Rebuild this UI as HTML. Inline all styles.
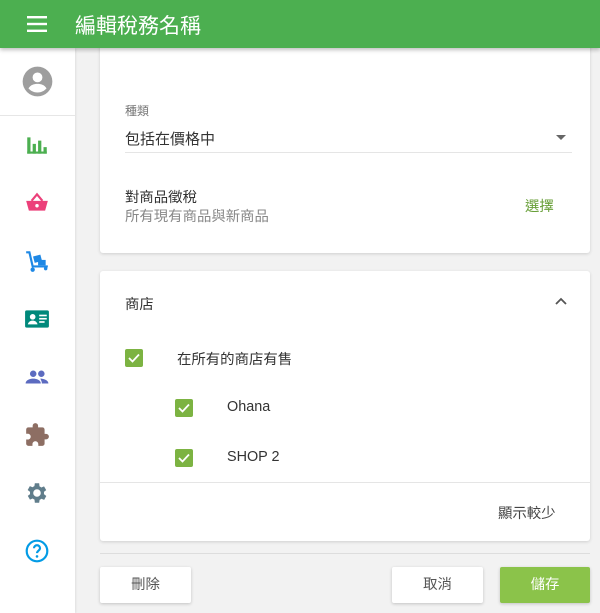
<!DOCTYPE html>
<html><head><meta charset="utf-8"><style>
*{box-sizing:border-box;margin:0;padding:0}
body{width:600px;height:613px;overflow:hidden;background:#f2f2f2;font-family:"Liberation Sans","Noto Sans CJK TC",sans-serif;position:relative;color:#333}
.hdr{position:absolute;left:0;top:0;width:600px;height:48px;background:#4caf50;box-shadow:0 2px 4px rgba(0,0,0,.25);z-index:5}
.hdr .t{position:absolute;left:75px;top:10px;color:#fff;font-size:21px}
.side{position:absolute;left:0;top:48px;width:75px;height:565px;background:#fff;box-shadow:1px 0 2px rgba(0,0,0,.08)}
.side .sep{position:absolute;left:0;top:67px;width:75px;height:1px;background:#e6e6e6}
.ic{position:absolute;left:24px;width:26px;height:26px}
.card{position:absolute;left:100px;width:490px;background:#fff;border-radius:3px;box-shadow:0 1px 3px rgba(0,0,0,.15)}
.s{position:absolute;font-size:14.4px;white-space:nowrap}
.cb{position:absolute;width:18px;height:18px;background:#7cb342;border-radius:2px}
.btn{position:absolute;top:567px;height:36px;border-radius:2px;font-size:14.4px;text-align:center;line-height:36px;box-shadow:0 1px 3px rgba(0,0,0,.2)}
</style></head><body>
<div class="hdr">
<svg style="position:absolute;left:27px;top:15px" width="20" height="18"><rect y="1" width="20" height="2.4" fill="#fff"/><rect y="7.8" width="20" height="2.4" fill="#fff"/><rect y="14.6" width="20" height="2.4" fill="#fff"/></svg>
<div class="t">編輯稅務名稱</div></div>
<div class="side">
<svg style="position:absolute;left:22px;top:18px" width="31" height="31" viewBox="0 0 24 24"><circle cx="12" cy="12" r="11.5" fill="#9e9e9e"/><circle cx="12" cy="8.8" r="3.8" fill="#fff"/><path d="M5 17.3c1.6-2.7 4.2-3.5 7-3.5s5.4.8 7 3.5c-1.8 2-4.2 3.2-7 3.2s-5.2-1.2-7-3.2z" fill="#fff"/></svg>
<div class="sep"></div>
<svg class="ic" style="top:84px" viewBox="0 0 24 24"><path d="M3 5h3v15H3zM8 11h3v9H8zM13 8h3v12h-3zM18 14h3v6h-3z" fill="#4caf50"/><rect x="3" y="18" width="18" height="2" fill="#4caf50"/></svg>
<svg class="ic" style="top:142px" viewBox="0 0 24 24"><path d="M2 10h20l-2.5 9h-15z" fill="#ec407a"/><path d="M7 10l5-6 5 6" fill="none" stroke="#ec407a" stroke-width="2"/><circle cx="12" cy="14.5" r="1.6" fill="#fff"/></svg>
<svg class="ic" style="top:200px" viewBox="0 0 24 24"><path d="M2 4h3l3 13h14" fill="none" stroke="#1e88e5" stroke-width="2"/><rect x="9" y="7" width="7" height="6" fill="#1e88e5" transform="rotate(-15 12 10)"/><rect x="13" y="11" width="7" height="5" fill="#1e88e5"/><circle cx="8" cy="20" r="2" fill="#1e88e5"/><circle cx="20" cy="19" r="1.6" fill="#1e88e5"/></svg>
<svg class="ic" style="top:258px" viewBox="0 0 24 24"><rect x="1" y="4" width="22" height="16" rx="1.5" fill="#00897b"/><circle cx="8" cy="10" r="2.6" fill="#fff"/><path d="M3.5 17c.5-2.4 2.5-3.5 4.5-3.5s4 1.1 4.5 3.5z" fill="#fff"/><rect x="14" y="8" width="7" height="1.5" fill="#fff"/><rect x="14" y="11" width="7" height="1.5" fill="#fff"/><rect x="14" y="14" width="5" height="1.5" fill="#fff"/></svg>
<svg class="ic" style="top:316px" viewBox="0 0 24 24"><circle cx="8.5" cy="9" r="3" fill="#5c6bc0"/><circle cx="16" cy="9" r="3" fill="#5c6bc0"/><path d="M1.5 18c0-3 3.5-4.5 7-4.5s7 1.5 7 4.5z" fill="#5c6bc0"/><path d="M15 13.5c3.5 0 7.5 1.5 7.5 4.5h-6c0-2-1-3.5-1.5-4.5z" fill="#5c6bc0"/></svg>
<svg class="ic" style="top:374px" viewBox="0 0 24 24"><path d="M20.5 11H19V7c0-1.1-.9-2-2-2h-4V3.5a2.5 2.5 0 00-5 0V5H4c-1.1 0-2 .9-2 2v3.8h1.5c1.5 0 2.7 1.2 2.7 2.7S5 16.2 3.5 16.2H2V20c0 1.1.9 2 2 2h3.8v-1.5c0-1.5 1.2-2.7 2.7-2.7s2.7 1.2 2.7 2.7V22H17c1.1 0 2-.9 2-2v-4h1.5a2.5 2.5 0 000-5z" fill="#8d6e63"/></svg>
<svg class="ic" style="top:432px" viewBox="0 0 24 24"><path d="M19.4 13a7.5 7.5 0 000-2l2.1-1.6-2-3.5-2.5 1a7 7 0 00-1.7-1L15 3h-4l-.4 2.7a7 7 0 00-1.7 1l-2.5-1-2 3.5L6.6 11a7.5 7.5 0 000 2l-2.1 1.6 2 3.5 2.5-1a7 7 0 001.7 1L11 21h4l.4-2.7a7 7 0 001.7-1l2.5 1 2-3.5zM13 15.5a3.5 3.5 0 110-7 3.5 3.5 0 010 7z" fill="#607d8b" transform="translate(-1 0)"/></svg>
<svg class="ic" style="top:490px" viewBox="0 0 24 24"><circle cx="12" cy="12" r="9.5" fill="none" stroke="#039be5" stroke-width="2"/><path d="M9.2 9.5a2.8 2.8 0 115.6 0c0 2-2.8 2.2-2.8 4.5" fill="none" stroke="#039be5" stroke-width="2"/><circle cx="12" cy="17" r="1.2" fill="#039be5"/></svg>
</div>
<div class="card" style="top:40px;height:213px">
<div class="s" style="left:25px;top:62px;font-size:12px;color:#777">種類</div>
<div class="s" style="left:25px;top:88px;font-size:15px;color:#333">包括在價格中</div>
<svg style="position:absolute;left:456px;top:95px" width="10" height="6"><path d="M0 0h10L5 5z" fill="#666"/></svg>
<div style="position:absolute;left:25px;top:112px;width:447px;height:1px;background:#e5e5e5"></div>
<div class="s" style="left:25px;top:146px;color:#333">對商品徵稅</div>
<div class="s" style="left:25px;top:165px;color:#888">所有現有商品與新商品</div>
<div class="s" style="left:425px;top:155px;color:#689f38">選擇</div>
</div>
<div class="card" style="top:271px;height:270px">
<div class="s" style="left:25px;top:22px;color:#333">商店</div>
<svg style="position:absolute;left:455px;top:26px" width="12" height="8"><path d="M1 7l5-5 5 5" fill="none" stroke="#555" stroke-width="1.8"/></svg>
<div class="cb" style="left:25px;top:78px"></div>
<svg style="position:absolute;left:28px;top:82px" width="12" height="10"><path d="M1 5l3.5 3.5L11 1.5" fill="none" stroke="#fff" stroke-width="1.8"/></svg>
<div class="s" style="left:77px;top:77px;color:#333">在所有的商店有售</div>
<div class="cb" style="left:75px;top:128px"></div>
<svg style="position:absolute;left:78px;top:132px" width="12" height="10"><path d="M1 5l3.5 3.5L11 1.5" fill="none" stroke="#fff" stroke-width="1.8"/></svg>
<div class="s" style="left:127px;top:128px;color:#333">Ohana</div>
<div class="cb" style="left:75px;top:178px"></div>
<svg style="position:absolute;left:78px;top:182px" width="12" height="10"><path d="M1 5l3.5 3.5L11 1.5" fill="none" stroke="#fff" stroke-width="1.8"/></svg>
<div class="s" style="left:127px;top:178px;color:#333">SHOP 2</div>
<div style="position:absolute;left:0;top:211px;width:490px;height:1px;background:#e5e5e5"></div>
<div class="s" style="left:398px;top:231px;color:#444">顯示較少</div>
</div>
<div style="position:absolute;left:100px;top:553px;width:490px;height:1px;background:#ddd"></div>
<div class="btn" style="left:100px;width:91px;background:#fff;color:#555">刪除</div>
<div class="btn" style="left:392px;width:91px;background:#fff;color:#555">取消</div>
<div class="btn" style="left:500px;width:90px;background:#8bc34a;color:#fff">儲存</div>
</body></html>
